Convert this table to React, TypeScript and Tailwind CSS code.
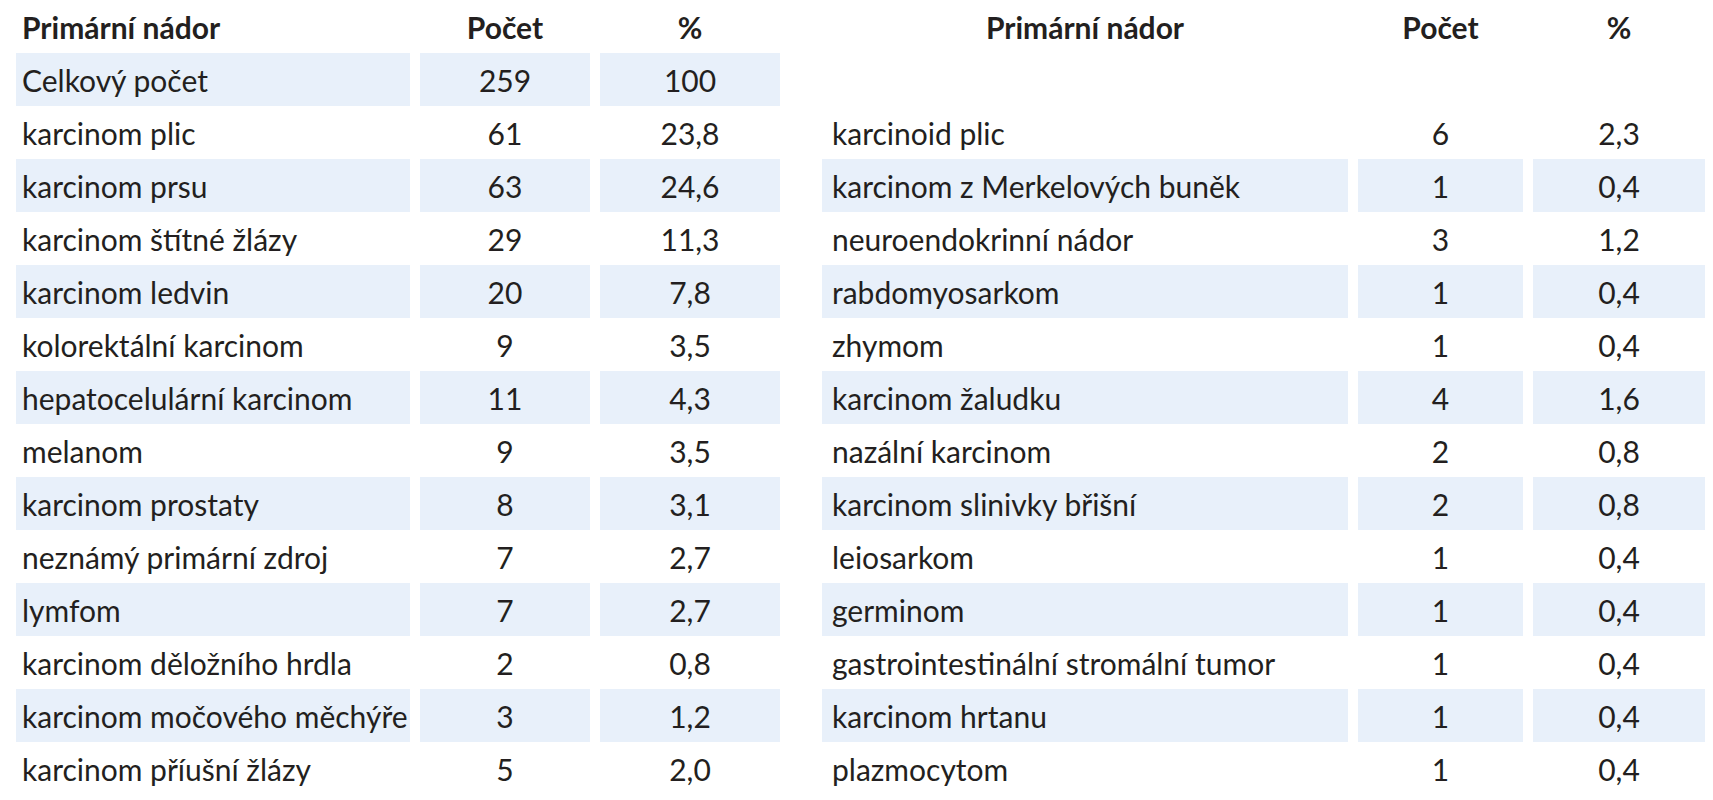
import React from "react";

type Row = { name: string; count: string; pct: string } | null;

const leftRows: Row[] = [
  { name: "Celkový počet", count: "259", pct: "100" },
  { name: "karcinom plic", count: "61", pct: "23,8" },
  { name: "karcinom prsu", count: "63", pct: "24,6" },
  { name: "karcinom štítné žlázy", count: "29", pct: "11,3" },
  { name: "karcinom ledvin", count: "20", pct: "7,8" },
  { name: "kolorektální karcinom", count: "9", pct: "3,5" },
  { name: "hepatocelulární karcinom", count: "11", pct: "4,3" },
  { name: "melanom", count: "9", pct: "3,5" },
  { name: "karcinom prostaty", count: "8", pct: "3,1" },
  { name: "neznámý primární zdroj", count: "7", pct: "2,7" },
  { name: "lymfom", count: "7", pct: "2,7" },
  { name: "karcinom děložního hrdla", count: "2", pct: "0,8" },
  { name: "karcinom močového měchýře", count: "3", pct: "1,2" },
  { name: "karcinom příušní žlázy", count: "5", pct: "2,0" },
];

const rightRows: Row[] = [
  null,
  { name: "karcinoid plic", count: "6", pct: "2,3" },
  { name: "karcinom z Merkelových buněk", count: "1", pct: "0,4" },
  { name: "neuroendokrinní nádor", count: "3", pct: "1,2" },
  { name: "rabdomyosarkom", count: "1", pct: "0,4" },
  { name: "zhymom", count: "1", pct: "0,4" },
  { name: "karcinom žaludku", count: "4", pct: "1,6" },
  { name: "nazální karcinom", count: "2", pct: "0,8" },
  { name: "karcinom slinivky břišní", count: "2", pct: "0,8" },
  { name: "leiosarkom", count: "1", pct: "0,4" },
  { name: "germinom", count: "1", pct: "0,4" },
  { name: "gastrointestinální stromální tumor", count: "1", pct: "0,4" },
  { name: "karcinom hrtanu", count: "1", pct: "0,4" },
  { name: "plazmocytom", count: "1", pct: "0,4" },
];

function Table({ rows, cols, namePad, centerHead }: { rows: Row[]; cols: string; namePad: string; centerHead: boolean }) {
  return (
    <div className={`grid ${cols} gap-x-[10px] auto-rows-[53px]`}>
      <div className={`flex items-center font-bold ${centerHead ? "justify-center" : namePad}`}>Primární nádor</div>
      <div className="flex items-center justify-center font-bold">Počet</div>
      <div className="flex items-center justify-center font-bold">%</div>
      {rows.map((r, i) => {
        // every other data row is tinted, the empty spacer row is not
        const shade = i % 2 === 0 && r ? "bg-[#e8f0fa]" : "";
        return (
          <React.Fragment key={i}>
            <div className={`flex items-center whitespace-nowrap ${namePad} ${shade}`}>{r?.name}</div>
            <div className={`flex items-center justify-center ${shade}`}>{r?.count}</div>
            <div className={`flex items-center justify-center ${shade}`}>{r?.pct}</div>
          </React.Fragment>
        );
      })}
    </div>
  );
}

export default function App() {
  return (
    <div className="w-[1713px] h-[800px] bg-white text-[#231f20] text-[30px] leading-none flex pl-[16px] gap-x-[42px] overflow-hidden" style={{ fontFamily: "Lato, 'Open Sans', sans-serif" }}>
      <Table rows={leftRows} cols="grid-cols-[394px_170px_180px]" namePad="pl-[6px]" centerHead={false} />
      <Table rows={rightRows} cols="grid-cols-[526px_165px_172px]" namePad="pl-[10px]" centerHead={true} />
    </div>
  );
}
